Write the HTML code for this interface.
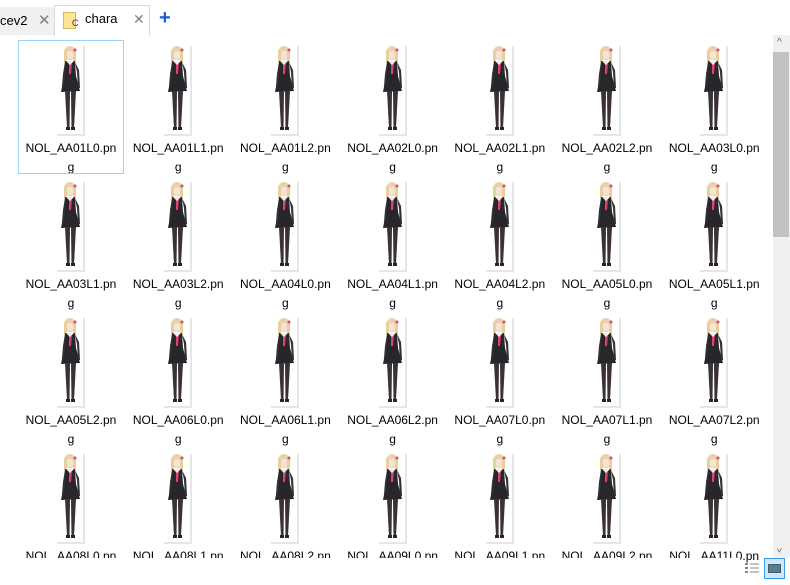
<!DOCTYPE html>
<html><head><meta charset="utf-8"><style>
*{margin:0;padding:0;box-sizing:border-box}
body{width:790px;height:582px;overflow:hidden;background:#fff;font-family:"Liberation Sans","Noto Sans CJK SC",sans-serif;position:relative}
.tab0{position:absolute;left:0;top:7px;width:54px;height:28px;background:#f0f0f0;font-size:13px;line-height:28px;color:#000}
.tab1{position:absolute;left:54px;top:5px;width:96px;height:31px;background:#fff;border:1px solid #d9d9d9;border-bottom:none;font-size:13px}
.x{position:absolute;color:#808080;font-size:14px}
.cell{position:absolute;width:104px;height:132px;text-align:center;font-size:12px;line-height:19px;color:#000}
.cell svg{display:block;margin:3px auto 0;}
.cell .t{margin-top:3px}
.sel{outline:1px solid #99d1ff}
.sb{position:absolute;left:773px;top:35px;width:17px;height:523px;background:#f0f0f0}
</style></head><body>
<svg width="0" height="0" style="position:absolute"><defs>
<g id="c">
<rect x="0" y="0" width="28" height="92" fill="#fff"/>
<rect x="26" y="2" width="2" height="90" fill="#e6e6e6"/>
<rect x="0" y="90" width="28" height="2" fill="#e6e6e6"/>
<ellipse cx="13" cy="9" rx="6" ry="7" fill="#ead2a8"/>
<ellipse cx="13" cy="11" rx="4" ry="4" fill="#f6e1d6"/>
<rect x="7" y="6" width="3" height="12" fill="#e8cfa0"/>
<rect x="16" y="6" width="3" height="12" fill="#e8cfa0"/>
<circle cx="18" cy="6" r="1.5" fill="#d05070"/>
<path d="M8 17 L18 17 L19 32 L23 47 L4 48 L7 32 Z" fill="#26262b"/>
<path d="M18 18 L22 26 L23 44 L21 44 L20 28 Z" fill="#303036"/>
<path d="M8 18 L6 30 L5 42 L7 42 L8 30Z" fill="#303036"/>
<path d="M12 18 L15 18 L14 30 L12 30 Z" fill="#e0406a"/>
<path d="M9 17 L17 17 L13 21Z" fill="#eee"/>
<path d="M8 47 L13 47 L12.5 84 L10 84 Z" fill="#3a3035"/>
<path d="M14 47 L19 47 L17 84 L14.5 84 Z" fill="#3a3035"/>
<rect x="9" y="83" width="4" height="3" fill="#2a2225"/>
<rect x="14" y="83" width="4" height="3" fill="#2a2225"/>
</g></defs></svg>
<div class="tab0">cev2<span class="x" style="left:38px;top:0;font-size:15px">✕</span></div>
<div class="tab1">
<div style="position:absolute;left:8px;top:6px;width:13px;height:17px;background:#fbe49a;border:1px solid #d9b85a"></div>
<span style="position:absolute;left:17px;top:12px;font-size:9px;color:#333">C</span>
<span style="position:absolute;left:30px;top:5px;">chara</span>
<span class="x" style="left:78px;top:5px">✕</span>
</div>
<div style="position:absolute;left:159px;top:7px;color:#1a56d6;font-size:20px;font-weight:bold">+</div>
<div id="g"></div>
<div class="sb">
<div style="position:absolute;left:4px;top:2px;font-size:10px;color:#606060">^</div>
<div style="position:absolute;left:0;top:17px;width:16px;height:185px;background:#c2c2c2"></div>
<div style="position:absolute;left:4px;top:507px;font-size:10px;color:#606060;transform:scaleY(-1)">^</div>
</div>
<div style="position:absolute;left:745px;top:562px;width:14px;height:13px">
<svg width="14" height="13"><g fill="#888"><rect x="0" y="1" width="3" height="2"/><rect x="0" y="5" width="3" height="2"/><rect x="0" y="9" width="3" height="2"/><rect x="5" y="1.5" width="9" height="1"/><rect x="5" y="5.5" width="9" height="1"/><rect x="5" y="9.5" width="9" height="1"/></g></svg>
</div>
<div style="position:absolute;left:764px;top:558px;width:21px;height:21px;background:#cce8ff;border:1px solid #3c9be8">
<div style="position:absolute;left:3px;top:5px;width:13px;height:9px;background:#4a7f9f;border:1px solid #555"></div>
</div>
<script>
var names=["AA01L0","AA01L1","AA01L2","AA02L0","AA02L1","AA02L2","AA03L0","AA03L1","AA03L2","AA04L0","AA04L1","AA04L2","AA05L0","AA05L1","AA05L2","AA06L0","AA06L1","AA06L2","AA07L0","AA07L1","AA07L2","AA08L0","AA08L1","AA08L2","AA09L0","AA09L1","AA09L2","AA11L0"];
var h="";
for(var i=0;i<28;i++){var r=Math.floor(i/7),c=i%7;
h+='<div class="cell'+(i==0?' sel':'')+'" style="left:'+(19+c*107.2)+'px;top:'+(41+r*136)+'px"><svg width="28" height="92"><use href="#c"/></svg><div class="t">NOL_'+names[i]+'.pn<br>g</div></div>';}
document.getElementById("g").innerHTML=h;
</script>
<div style="position:absolute;left:0;top:558px;width:740px;height:24px;background:#fff"></div>
</body></html>
